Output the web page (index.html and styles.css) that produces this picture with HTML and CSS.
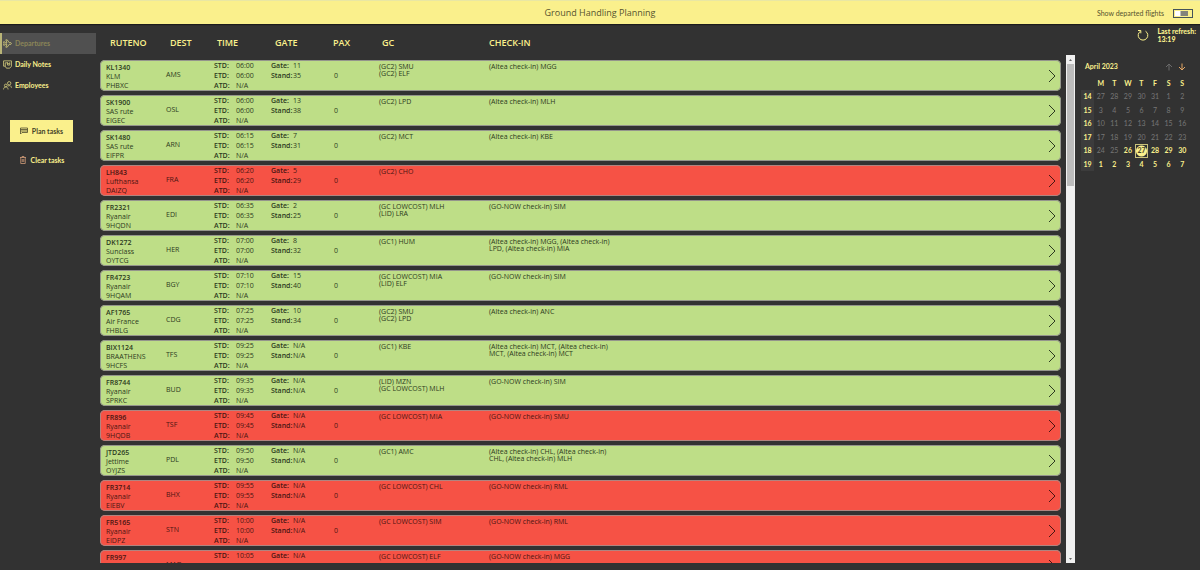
FILE: index.html
```html
<!DOCTYPE html>
<html lang="en">
<head>
<meta charset="utf-8">
<title>Ground Handling Planning</title>
<link rel="stylesheet" href="styles.css">
</head>
<body>
<header class="topbar">
  <h1 class="title">Ground Handling Planning</h1>
  <label class="departed">Show departed flights <input class="switch" type="checkbox" role="switch"></label>
</header>
<div class="layout">
  <aside class="sidebar">
    <nav class="nav">
      <a class="nav-item active" href="#departures"><svg class="nav-icon" viewBox="0 0 16 16"><path d="M1 5h2l1.500 2H7L5 1.500h2.500L11 6.500h3q2 1.500 0 3h-3l-3.500 5H5L7 9H4.500L3 11H1l.8-3z"/></svg>Departures</a>
      <a class="nav-item" href="#notes"><svg class="nav-icon" viewBox="0 0 16 16"><path d="M4 11H1V1.500h14V11l-3 3.500H6L4 11V5h4M8 4v5h4V4M8 6.500h4"/></svg>Daily Notes</a>
      <a class="nav-item" href="#employees"><svg class="nav-icon" viewBox="0 0 16 16"><circle cx="11" cy="4" r="3"/><circle cx="5" cy="8" r="2.500"/><path d="M1 15c0-6 8-6 8 0M9 9c3-2 6 0 6 3"/></svg>Employees</a>
    </nav>
    <div class="actions">
      <button class="btn plan" type="button"><svg class="btn-icon" viewBox="0 0 16 16"><path d="M1 2h14v9H4l-3 3zM1 5h14M1 8h14"/></svg>Plan tasks</button>
      <button class="btn clear" type="button"><svg class="btn-icon trash" viewBox="0 0 16 16"><path d="M2 3h12M6 3V1h4v2M3.500 3v12h9V3M6.500 6v6M9.500 6v6"/></svg>Clear tasks</button>
    </div>
  </aside>
  <main class="board">
    <table class="flights">
      <thead><tr class="head"><th>RUTENO</th><th>DEST</th><th>TIME</th><th>GATE</th><th>PAX</th><th>GC</th><th>CHECK-IN</th></tr></thead>
      <tbody class="rows">
        <tr class="row"><td class="route"><b>KL1340</b><br>KLM<br>PHBXC</td><td class="dest">AMS</td><td class="pairs"><b>STD:</b>06:00<br><b>ETD:</b>06:00<br><b>ATD:</b>N/A</td><td class="pairs"><b>Gate:</b>11<br><b>Stand:</b>35</td><td class="pax">0</td><td class="staff">(GC2) SMU<br>(GC2) ELF</td><td class="staff">(Altea check-in) MGG</td><td class="go"><svg class="chevron" viewBox="0 0 8 14"><path d="M1 1l6 6-6 6"/></svg></td></tr>
        <tr class="row"><td class="route"><b>SK1900</b><br>SAS rute<br>EIGEC</td><td class="dest">OSL</td><td class="pairs"><b>STD:</b>06:00<br><b>ETD:</b>06:00<br><b>ATD:</b>N/A</td><td class="pairs"><b>Gate:</b>13<br><b>Stand:</b>38</td><td class="pax">0</td><td class="staff">(GC2) LPD</td><td class="staff">(Altea check-in) MLH</td><td class="go"><svg class="chevron" viewBox="0 0 8 14"><path d="M1 1l6 6-6 6"/></svg></td></tr>
        <tr class="row"><td class="route"><b>SK1480</b><br>SAS rute<br>EIFPR</td><td class="dest">ARN</td><td class="pairs"><b>STD:</b>06:15<br><b>ETD:</b>06:15<br><b>ATD:</b>N/A</td><td class="pairs"><b>Gate:</b>7<br><b>Stand:</b>31</td><td class="pax">0</td><td class="staff">(GC2) MCT</td><td class="staff">(Altea check-in) KBE</td><td class="go"><svg class="chevron" viewBox="0 0 8 14"><path d="M1 1l6 6-6 6"/></svg></td></tr>
        <tr class="row late"><td class="route"><b>LH843</b><br>Lufthansa<br>DAIZQ</td><td class="dest">FRA</td><td class="pairs"><b>STD:</b>06:20<br><b>ETD:</b>06:20<br><b>ATD:</b>N/A</td><td class="pairs"><b>Gate:</b>5<br><b>Stand:</b>29</td><td class="pax">0</td><td class="staff">(GC2) CHO</td><td class="staff"></td><td class="go"><svg class="chevron" viewBox="0 0 8 14"><path d="M1 1l6 6-6 6"/></svg></td></tr>
        <tr class="row"><td class="route"><b>FR2321</b><br>Ryanair<br>9HQDN</td><td class="dest">EDI</td><td class="pairs"><b>STD:</b>06:35<br><b>ETD:</b>06:35<br><b>ATD:</b>N/A</td><td class="pairs"><b>Gate:</b>2<br><b>Stand:</b>25</td><td class="pax">0</td><td class="staff">(GC LOWCOST) MLH<br>(LID) LRA</td><td class="staff">(GO-NOW check-in) SIM</td><td class="go"><svg class="chevron" viewBox="0 0 8 14"><path d="M1 1l6 6-6 6"/></svg></td></tr>
        <tr class="row"><td class="route"><b>DK1272</b><br>Sunclass<br>OYTCG</td><td class="dest">HER</td><td class="pairs"><b>STD:</b>07:00<br><b>ETD:</b>07:00<br><b>ATD:</b>N/A</td><td class="pairs"><b>Gate:</b>8<br><b>Stand:</b>32</td><td class="pax">0</td><td class="staff">(GC1) HUM</td><td class="staff">(Altea check-in) MGG, (Altea check-in) LPD, (Altea check-in) MIA</td><td class="go"><svg class="chevron" viewBox="0 0 8 14"><path d="M1 1l6 6-6 6"/></svg></td></tr>
        <tr class="row"><td class="route"><b>FR4723</b><br>Ryanair<br>9HQAM</td><td class="dest">BGY</td><td class="pairs"><b>STD:</b>07:10<br><b>ETD:</b>07:10<br><b>ATD:</b>N/A</td><td class="pairs"><b>Gate:</b>15<br><b>Stand:</b>40</td><td class="pax">0</td><td class="staff">(GC LOWCOST) MIA<br>(LID) ELF</td><td class="staff">(GO-NOW check-in) SIM</td><td class="go"><svg class="chevron" viewBox="0 0 8 14"><path d="M1 1l6 6-6 6"/></svg></td></tr>
        <tr class="row"><td class="route"><b>AF1765</b><br>Air France<br>FHBLG</td><td class="dest">CDG</td><td class="pairs"><b>STD:</b>07:25<br><b>ETD:</b>07:25<br><b>ATD:</b>N/A</td><td class="pairs"><b>Gate:</b>10<br><b>Stand:</b>34</td><td class="pax">0</td><td class="staff">(GC2) SMU<br>(GC2) LPD</td><td class="staff">(Altea check-in) ANC</td><td class="go"><svg class="chevron" viewBox="0 0 8 14"><path d="M1 1l6 6-6 6"/></svg></td></tr>
        <tr class="row"><td class="route"><b>BIX1124</b><br>BRAATHENS<br>9HCFS</td><td class="dest">TFS</td><td class="pairs"><b>STD:</b>09:25<br><b>ETD:</b>09:25<br><b>ATD:</b>N/A</td><td class="pairs"><b>Gate:</b>N/A<br><b>Stand:</b>N/A</td><td class="pax">0</td><td class="staff">(GC1) KBE</td><td class="staff">(Altea check-in) MCT, (Altea check-in) MCT, (Altea check-in) MCT</td><td class="go"><svg class="chevron" viewBox="0 0 8 14"><path d="M1 1l6 6-6 6"/></svg></td></tr>
        <tr class="row"><td class="route"><b>FR8744</b><br>Ryanair<br>SPRKC</td><td class="dest">BUD</td><td class="pairs"><b>STD:</b>09:35<br><b>ETD:</b>09:35<br><b>ATD:</b>N/A</td><td class="pairs"><b>Gate:</b>N/A<br><b>Stand:</b>N/A</td><td class="pax">0</td><td class="staff">(LID) MZN<br>(GC LOWCOST) MLH</td><td class="staff">(GO-NOW check-in) SIM</td><td class="go"><svg class="chevron" viewBox="0 0 8 14"><path d="M1 1l6 6-6 6"/></svg></td></tr>
        <tr class="row late"><td class="route"><b>FR896</b><br>Ryanair<br>9HQDB</td><td class="dest">TSF</td><td class="pairs"><b>STD:</b>09:45<br><b>ETD:</b>09:45<br><b>ATD:</b>N/A</td><td class="pairs"><b>Gate:</b>N/A<br><b>Stand:</b>N/A</td><td class="pax">0</td><td class="staff">(GC LOWCOST) MIA</td><td class="staff">(GO-NOW check-in) SMU</td><td class="go"><svg class="chevron" viewBox="0 0 8 14"><path d="M1 1l6 6-6 6"/></svg></td></tr>
        <tr class="row"><td class="route"><b>JTD265</b><br>Jettime<br>OYJZS</td><td class="dest">PDL</td><td class="pairs"><b>STD:</b>09:50<br><b>ETD:</b>09:50<br><b>ATD:</b>N/A</td><td class="pairs"><b>Gate:</b>N/A<br><b>Stand:</b>N/A</td><td class="pax">0</td><td class="staff">(GC1) AMC</td><td class="staff">(Altea check-in) CHL, (Altea check-in) CHL, (Altea check-in) MLH</td><td class="go"><svg class="chevron" viewBox="0 0 8 14"><path d="M1 1l6 6-6 6"/></svg></td></tr>
        <tr class="row late"><td class="route"><b>FR3714</b><br>Ryanair<br>EIEBV</td><td class="dest">BHX</td><td class="pairs"><b>STD:</b>09:55<br><b>ETD:</b>09:55<br><b>ATD:</b>N/A</td><td class="pairs"><b>Gate:</b>N/A<br><b>Stand:</b>N/A</td><td class="pax">0</td><td class="staff">(GC LOWCOST) CHL</td><td class="staff">(GO-NOW check-in) RML</td><td class="go"><svg class="chevron" viewBox="0 0 8 14"><path d="M1 1l6 6-6 6"/></svg></td></tr>
        <tr class="row late"><td class="route"><b>FR5165</b><br>Ryanair<br>EIDPZ</td><td class="dest">STN</td><td class="pairs"><b>STD:</b>10:00<br><b>ETD:</b>10:00<br><b>ATD:</b>N/A</td><td class="pairs"><b>Gate:</b>N/A<br><b>Stand:</b>N/A</td><td class="pax">0</td><td class="staff">(GC LOWCOST) SIM</td><td class="staff">(GO-NOW check-in) RML</td><td class="go"><svg class="chevron" viewBox="0 0 8 14"><path d="M1 1l6 6-6 6"/></svg></td></tr>
        <tr class="row late"><td class="route"><b>FR997</b></td><td class="dest">MAD</td><td class="pairs"><b>STD:</b>10:05</td><td class="pairs"><b>Gate:</b>N/A</td><td class="pax"></td><td class="staff">(GC LOWCOST) ELF</td><td class="staff">(GO-NOW check-in) MGG</td><td class="go"><svg class="chevron" viewBox="0 0 8 14"><path d="M1 1l6 6-6 6"/></svg></td></tr>
      </tbody>
    </table>
    <div class="scrollbar"><svg class="cap" viewBox="0 0 9 9"><path d="M3 6h3L4.500 4z"/></svg><span class="thumb"></span><svg class="cap end" viewBox="0 0 9 9"><path d="M3 4h3L4.500 6z"/></svg></div>
  </main>
  <aside class="side">
    <div class="refresh"><svg class="reload" viewBox="0 0 12 12"><path d="M3.500 2.200A4.800 4.800 0 1 0 8.500 2.200M1 1.500h2.800v2.800"/></svg><span>Last refresh:<br>13:19</span></div>
    <div class="cal-head"><span class="month">April 2023</span>
      <button class="arrow up" type="button" aria-label="Previous month"><svg viewBox="0 0 8 8"><path d="M4 7.500V1M1 4l3-3 3 3"/></svg></button>
      <button class="arrow" type="button" aria-label="Next month"><svg viewBox="0 0 8 8"><path d="M4 .500V7M1 4l3 3 3-3"/></svg></button></div>
    <table class="cal">
      <thead><tr><th class="week"></th><th>M</th><th>T</th><th>W</th><th>T</th><th>F</th><th>S</th><th>S</th></tr></thead>
      <tbody>
        <tr class="past"><th>14</th><td>27</td><td>28</td><td>29</td><td>30</td><td>31</td><td>1</td><td>2</td></tr>
        <tr class="past"><th>15</th><td>3</td><td>4</td><td>5</td><td>6</td><td>7</td><td>8</td><td>9</td></tr>
        <tr class="past"><th>16</th><td>10</td><td>11</td><td>12</td><td>13</td><td>14</td><td>15</td><td>16</td></tr>
        <tr class="past"><th>17</th><td>17</td><td>18</td><td>19</td><td>20</td><td>21</td><td>22</td><td>23</td></tr>
        <tr><th>18</th><td class="off">24</td><td class="off">25</td><td>26</td><td class="today">27</td><td>28</td><td>29</td><td>30</td></tr>
        <tr><th>19</th><td>1</td><td>2</td><td>3</td><td>4</td><td>5</td><td>6</td><td>7</td></tr>
      </tbody>
    </table>
  </aside>
</div>
</body>
</html>
```
FILE: styles.css
```css
* { box-sizing: border-box; }
body {
  margin: 0;
  height: 100vh;
  display: flex;
  flex-direction: column;
  overflow: hidden;
  background: #323232;
  color: #faf08c;
  font: 7px/9px "Open Sans", "Noto Sans", sans-serif;
}
svg { fill: none; stroke: currentColor; }
button { font: inherit; border: 0; background: none; color: inherit; padding: 0; }
.topbar {
  display: grid;
  grid-template-columns: 1fr auto 1fr;
  align-items: center;
  flex: none;
  height: 24px;
  padding: 1px 7px 0;
  background: #faf08c;
  color: #55522e;
  border-top: 1px solid #e9e7a4;
  box-shadow: 0 1px 1px #1c1c1c;
}
.title { grid-column: 2; margin: 0; font-size: 9px; line-height: 12px; font-weight: 400; }
.departed { display: flex; align-items: center; justify-content: flex-end; gap: 9px; font-family: Lato, sans-serif; }
.switch {
  appearance: none;
  width: 20px;
  height: 9px;
  margin: 0;
  padding: 1px 4px 1px 1px;
  border: 1px solid #45535a;
  background: linear-gradient(90deg, #fff 6px, #83837a 7px);
  background-clip: content-box;
}
.layout { flex: 1; min-height: 0; display: flex; }
.sidebar { width: 96px; padding-top: 9px; font-family: Lato, sans-serif; font-weight: 700; }
.nav-item {
  display: flex;
  align-items: center;
  gap: 3px;
  height: 21px;
  padding-left: 3px;
  color: #faf08c;
  text-decoration: none;
}
.nav-item.active { background: #505050; color: #8b8558; border-left: 2px solid #b9b477; padding-left: 1px; }
.nav-icon { width: 9px; height: 9px; stroke-width: 1.5; color: #cfc77a; }
.actions { display: flex; flex-direction: column; gap: 7px; padding: 24px 23px 0 10px; }
.btn { display: flex; align-items: center; justify-content: center; gap: 4px; height: 22px; }
.plan { background: #faf08c; color: #444228; }
.btn-icon { width: 8px; height: 8px; stroke-width: 1.5; }
.trash { color: #d9a27c; }
.board { flex: 1; min-width: 0; display: flex; gap: 5px; padding: 0 0 7px 4px; }
.flights { flex: 1; min-width: 0; display: flex; flex-direction: column; }
.head, .row {
  display: grid;
  grid-template-columns: 60px 48px 57px 63px 45px 110px 124px 1fr;
  padding: 0 5px 0 6px;
}
.head { padding-top: 13px; padding-bottom: 12px; grid-template-columns: 60px 47px 58px 58px 49px 107px 1fr; padding-left: 10px; }
.head th { padding: 0; text-align: left; font-size: 9px; line-height: 11px; font-weight: 600; }
.rows { flex: 1; min-height: 0; overflow: hidden; display: flex; flex-direction: column; gap: 4px; }
.row {
  flex: none;
  height: 31px;
  border-radius: 5px;
  background: #bede87;
  color: #2c3a20;
  box-shadow: inset 0 0 0 1px #94958c;
}
.row.late { background: #f65245; color: #4b1512; box-shadow: inset 0 0 0 1px #b08480; }
.row td { padding: 0; }
.row b { font-weight: 600; }
.row .route { padding-top: 3px; }
.row .dest { padding-top: 10px; }
.row .pairs { padding-top: 1px; line-height: 10px; }
.pairs b { display: inline-block; width: 22px; }
.row .pax { padding-top: 11px; }
.row .staff { padding-top: 3px; line-height: 7px; }
.row .go { display: flex; align-items: center; justify-content: flex-end; }
.chevron { width: 8px; height: 14px; }
.scrollbar { flex: none; width: 9px; margin-top: 31px; display: flex; flex-direction: column; background: #f0f0f0; color: #666; }
.cap { flex: none; width: 9px; height: 9px; fill: currentColor; stroke: none; }
.end { margin-top: auto; }
.thumb { height: 122px; margin: 0 1px; background: #bcbcbc; }
.side { width: 125px; padding: 3px 4px 0 6px; font-family: Lato, sans-serif; font-weight: 700; }
.refresh { display: flex; justify-content: flex-end; gap: 8px; line-height: 8px; font-weight: 900; }
.reload { width: 12px; height: 12px; margin-top: 2px; }
.cal-head { display: flex; align-items: center; gap: 5px; padding: 19px 10px 0 4px; }
.month { flex: 1; }
.arrow { width: 8px; height: 8px; color: #e4a765; }
.arrow svg { display: block; width: 8px; height: 8px; }
.arrow.up { color: #6a6a6a; }
.cal { table-layout: fixed; border-collapse: collapse; width: 108px; height: 94px; margin-top: 6px; }
.cal th, .cal td { padding: 0; text-align: center; font-weight: 700; }
.cal thead th { height: 13px; }
.cal .week { width: 13px; }
.cal tbody th { background: #3c3c3c; }
.cal .past td, .cal .off { color: #767676; font-weight: 400; }
.cal .today {
  background: radial-gradient(circle, #faf08c 5px, transparent 6px);
  box-shadow: inset 0 0 0 1px #c9c27a;
  color: #444228;
}
```
